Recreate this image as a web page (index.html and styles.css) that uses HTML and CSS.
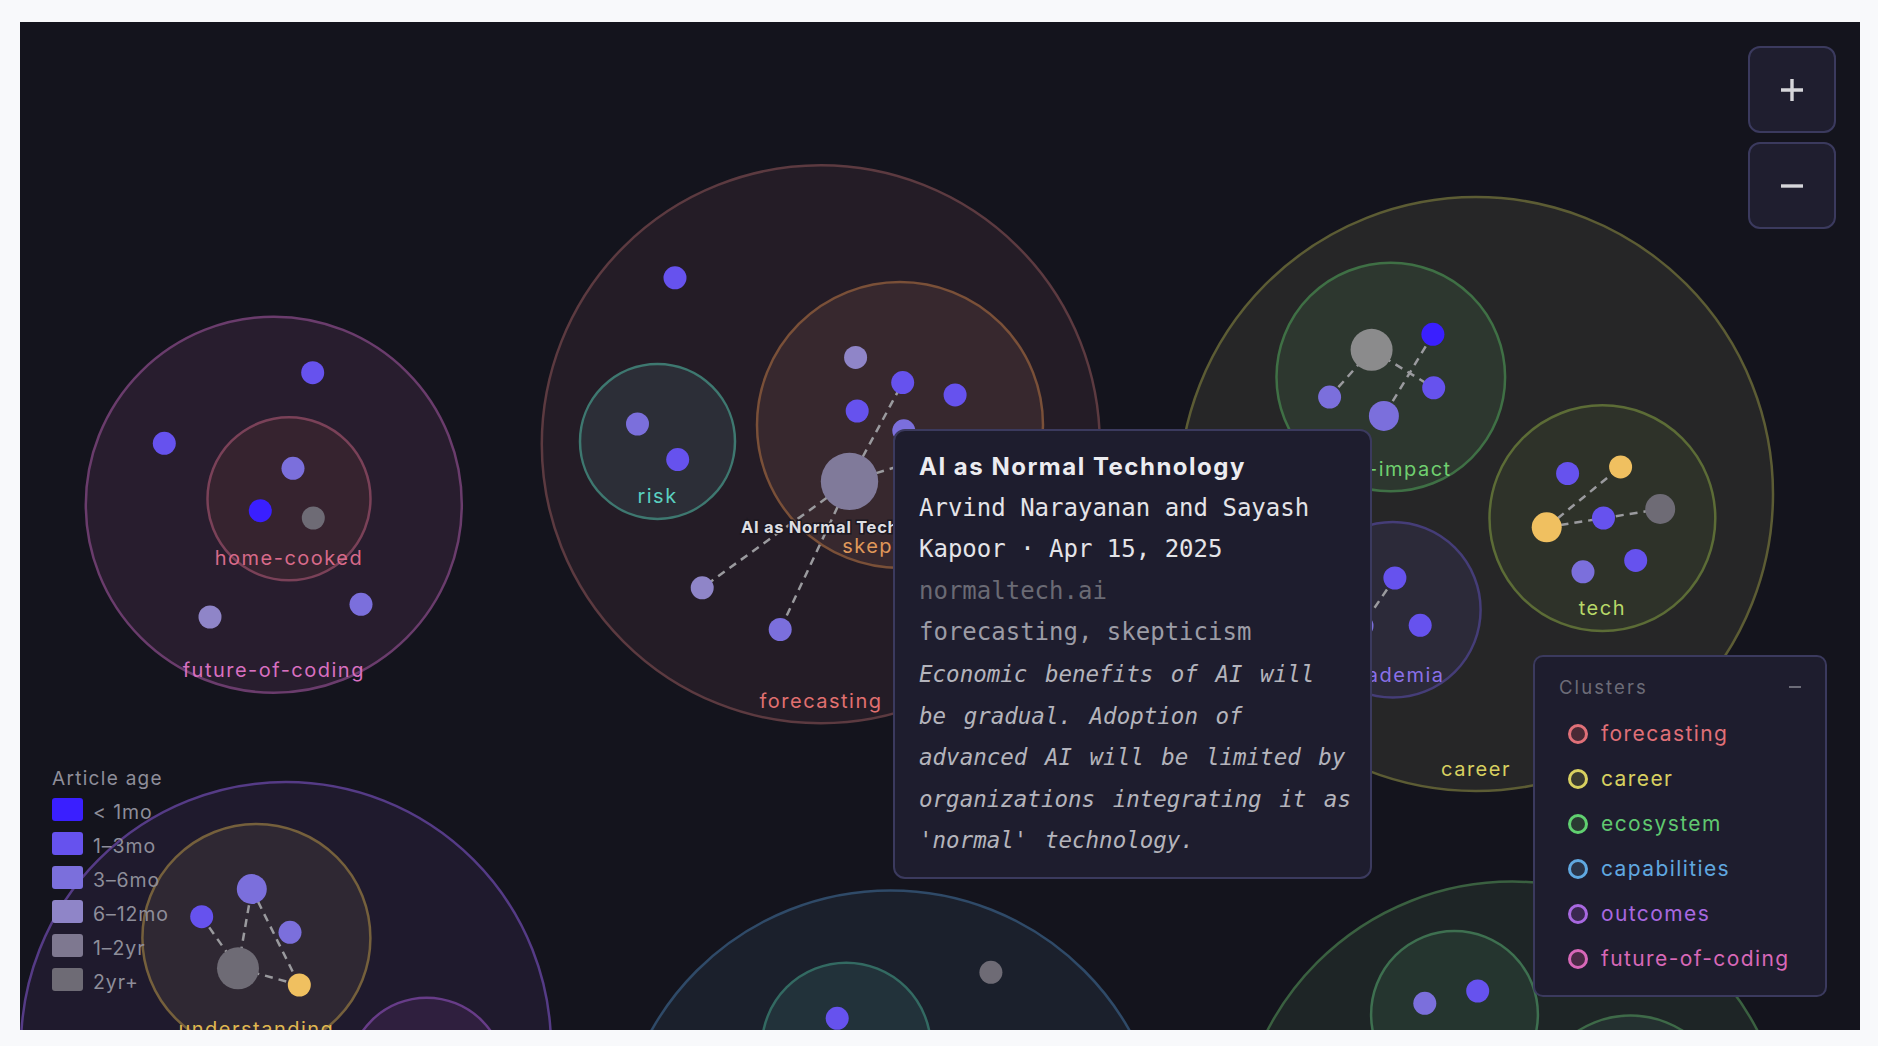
FILE: index.html
```html
<!DOCTYPE html>
<html>

<head>
    <title>Reading map</title>
    <link rel="stylesheet" href="styles.css">
</head>

<body>
<div class="stage">
    <svg class="graph" width="1840" height="1008" viewBox="20 22 1840 1008">
        <!-- cluster bubbles -->
        <circle class="ring fc-outer" cx="273.8" cy="504.7" r="188"/>
        <circle class="ring hc" cx="289" cy="498.8" r="81.5"/>
        <circle class="ring fore" cx="820.8" cy="444.3" r="279"/>
        <circle class="ring risk" cx="657.5" cy="441.4" r="77.5"/>
        <circle class="ring skep" cx="900" cy="425" r="143"/>
        <circle class="ring career" cx="1476" cy="494" r="297"/>
        <circle class="ring labor" cx="1390.8" cy="377" r="114.3"/>
        <circle class="ring acad" cx="1392.8" cy="609.8" r="87.8"/>
        <circle class="ring tech" cx="1602.4" cy="518.2" r="112.9"/>
        <circle class="ring outc" cx="286" cy="1047" r="265"/>
        <circle class="ring under" cx="256.4" cy="938" r="114"/>
        <circle class="ring outc-small" cx="426.7" cy="1075.7" r="78"/>
        <circle class="ring caps" cx="890.5" cy="1164.5" r="274"/>
        <circle class="ring caps-in" cx="846.3" cy="1047.2" r="84.5"/>
        <circle class="ring eco" cx="1512.4" cy="1157.6" r="276"/>
        <circle class="ring eco-in" cx="1454.5" cy="1014.4" r="83.4"/>
        <circle class="ring eco-small" cx="1630.5" cy="1112.5" r="97"/>

        <!-- links -->
        <line class="edge" x1="849.5" y1="481.4" x2="902.7" y2="382.6"/>
        <line class="edge" x1="849.5" y1="481.4" x2="702.2" y2="587.8"/>
        <line class="edge" x1="849.5" y1="481.4" x2="780.2" y2="629.5"/>
        <line class="edge" x1="849.5" y1="481.4" x2="980" y2="441"/>
        <line class="edge" x1="1371.6" y1="349.8" x2="1329.6" y2="397.1"/>
        <line class="edge" x1="1371.6" y1="349.8" x2="1433.7" y2="387.8"/>
        <line class="edge" x1="1432.9" y1="334.3" x2="1383.9" y2="415.9"/>
        <line class="edge" x1="1394.9" y1="578" x2="1362" y2="626"/>
        <line class="edge" x1="1546.7" y1="527.3" x2="1620.6" y2="466.9"/>
        <line class="edge" x1="1546.7" y1="527.3" x2="1660.2" y2="509"/>
        <line class="edge" x1="238" y1="968.3" x2="201.7" y2="916.7"/>
        <line class="edge" x1="238" y1="968.3" x2="251.8" y2="889"/>
        <line class="edge" x1="238" y1="968.3" x2="299.3" y2="985"/>
        <line class="edge" x1="251.8" y1="889" x2="299.3" y2="985"/>

        <!-- articles -->
        <circle class="age1" cx="312.7" cy="372.7" r="11.5"/>
        <circle class="age1" cx="164.3" cy="443.3" r="11.5"/>
        <circle class="age2" cx="293" cy="468.3" r="11.5"/>
        <circle class="age0" cx="260.3" cy="510.7" r="11.5"/>
        <circle class="age5" cx="313.3" cy="518" r="11.5"/>
        <circle class="age3" cx="210" cy="617" r="11.5"/>
        <circle class="age2" cx="361" cy="604.3" r="11.5"/>

        <circle class="age1" cx="675" cy="277.8" r="11.5"/>
        <circle class="age2" cx="637.5" cy="424" r="11.5"/>
        <circle class="age1" cx="677.7" cy="459.6" r="11.5"/>
        <circle class="age3" cx="855.6" cy="357.4" r="11.5"/>
        <circle class="age1" cx="902.7" cy="382.6" r="11.5"/>
        <circle class="age1" cx="955.1" cy="394.9" r="11.5"/>
        <circle class="age1" cx="857.2" cy="411" r="11.5"/>
        <circle class="age2" cx="903.8" cy="430.8" r="11.5"/>
        <circle class="age4" cx="849.5" cy="481.4" r="28.7"/>
        <circle class="age3" cx="702.2" cy="587.8" r="11.5"/>
        <circle class="age2" cx="780.2" cy="629.5" r="11.5"/>

        <circle class="grey" cx="1371.6" cy="349.8" r="21"/>
        <circle class="age0" cx="1432.9" cy="334.3" r="11.5"/>
        <circle class="age2" cx="1329.6" cy="397.1" r="11.5"/>
        <circle class="age1" cx="1433.7" cy="387.8" r="11.5"/>
        <circle class="age2" cx="1383.9" cy="415.9" r="15"/>

        <circle class="age1" cx="1394.9" cy="578" r="11.5"/>
        <circle class="age1" cx="1420.2" cy="625.3" r="11.5"/>
        <circle class="age2" cx="1362" cy="626" r="11.5"/>

        <circle class="age1" cx="1567.6" cy="473.5" r="11.5"/>
        <circle class="gold" cx="1620.6" cy="466.9" r="11.5"/>
        <circle class="gold" cx="1546.7" cy="527.3" r="15"/>
        <circle class="age1" cx="1603.5" cy="518" r="11.5"/>
        <circle class="age5" cx="1660.2" cy="509" r="15"/>
        <circle class="age2" cx="1583" cy="571.8" r="11.5"/>
        <circle class="age1" cx="1635.7" cy="560.4" r="11.5"/>

        <circle class="age2" cx="251.8" cy="889" r="15"/>
        <circle class="age1" cx="201.7" cy="916.7" r="11.5"/>
        <circle class="age2" cx="290" cy="932.3" r="11.5"/>
        <circle class="age5" cx="238" cy="968.3" r="21"/>
        <circle class="gold" cx="299.3" cy="985" r="11.5"/>

        <circle class="age1" cx="837.2" cy="1018.3" r="11.5"/>
        <circle class="age5" cx="990.9" cy="972.3" r="11.5"/>
        <circle class="age2" cx="1424.8" cy="1003.3" r="11.5"/>
        <circle class="age1" cx="1477.7" cy="991" r="11.5"/>

        <!-- labels -->
        <text class="label t-fc" x="273.8" y="677">future-of-coding</text>
        <text class="label t-hc" x="289" y="564.7">home-cooked</text>
        <text class="label t-fore" x="821" y="707.7">forecasting</text>
        <text class="label t-risk" x="657.5" y="503">risk</text>
        <text class="label t-skep" x="900" y="552.7">skepticism</text>
        <text class="label t-career" x="1476" y="776">career</text>
        <text class="label t-labor" x="1393" y="476">job-impact</text>
        <text class="label t-acad" x="1392.8" y="682">academia</text>
        <text class="label t-tech" x="1602.4" y="614.8">tech</text>
        <text class="label t-under" x="256.4" y="1036">understanding</text>
        <text class="node-title" x="849.5" y="533">AI as Normal Technology</text>
    </svg>

    <div class="zoom">
        <button class="zoom-btn">
            <svg width="24" height="24" viewBox="0 0 24 24"><path d="M12 1v22M1 12h22"/></svg>
        </button>
        <button class="zoom-btn">
            <svg width="24" height="24" viewBox="0 0 24 24"><path d="M1 12h22"/></svg>
        </button>
    </div>

    <div class="age">
        <div class="age-title">Article age</div>
        <div class="age-row"><span class="swatch sw0"></span><span class="age-label">&lt; 1mo</span></div>
        <div class="age-row"><span class="swatch sw1"></span><span class="age-label">1–3mo</span></div>
        <div class="age-row"><span class="swatch sw2"></span><span class="age-label">3–6mo</span></div>
        <div class="age-row"><span class="swatch sw3"></span><span class="age-label">6–12mo</span></div>
        <div class="age-row"><span class="swatch sw4"></span><span class="age-label">1–2yr</span></div>
        <div class="age-row"><span class="swatch sw5"></span><span class="age-label">2yr+</span></div>
    </div>

    <div class="tooltip">
        <div class="tip-title">AI as Normal Technology</div>
        <div class="tip-meta">Arvind Narayanan and Sayash Kapoor · Apr 15, 2025</div>
        <div class="tip-source">normaltech.ai</div>
        <div class="tip-tags">forecasting, skepticism</div>
        <div class="tip-summary">
            <span>Economic benefits of AI will</span>
            <span>be gradual. Adoption of</span>
            <span>advanced AI will be limited by</span>
            <span>organizations integrating it as</span>
            <span>'normal' technology.</span>
        </div>
    </div>

    <div class="clusters">
        <div class="clusters-head">
            <span>Clusters</span>
            <span class="collapse"></span>
        </div>
        <ul class="cluster-list">
            <li class="k-fore"><span class="dot"></span>forecasting</li>
            <li class="k-career"><span class="dot"></span>career</li>
            <li class="k-eco"><span class="dot"></span>ecosystem</li>
            <li class="k-caps"><span class="dot"></span>capabilities</li>
            <li class="k-outc"><span class="dot"></span>outcomes</li>
            <li class="k-fc"><span class="dot"></span>future-of-coding</li>
        </ul>
    </div>
</div>
</body>

</html>
```

FILE: styles.css
```css
body {
    margin: 0;
    background-color: #f8f9fb;
    font-family: Inter, "Noto Sans", sans-serif;
}

.stage {
    position: relative;
    width: 1840px;
    height: 1008px;
    margin: 22px 0 0 20px;
    background-color: #14141d;
    overflow: hidden;
}

.graph {
    display: block;
}

/* bubbles */
.ring {
    stroke-width: 2.5;
}

.fc-outer { fill: #281d2e; stroke: #6a3c6c; }
.hc { fill: #36232f; stroke: #7a4158; }
.fore { fill: #241c26; stroke: #5c3a40; }
.risk { fill: #2c2e37; stroke: #3e7870; }
.skep { fill: #37282e; stroke: #7a5038; }
.career { fill: #262627; stroke: #5c5c34; }
.labor { fill: #2d372f; stroke: #3f7045; }
.acad { fill: #2c2a39; stroke: #453d78; }
.tech { fill: #2e3229; stroke: #5c6c36; }
.outc { fill: #1f1a2d; stroke: #553b86; }
.under { fill: #2f2833; stroke: #75603c; }
.outc-small { fill: #2f1f3e; stroke: #673c88; }
.caps { fill: #1b202c; stroke: #2f4a68; }
.caps-in { fill: #22323a; stroke: #336a62; }
.eco { fill: #1e2526; stroke: #3a6040; }
.eco-in { fill: #25352f; stroke: #3e7050; }
.eco-small { fill: #243030; stroke: #3e6a48; }

.edge {
    stroke: #9a9a9e;
    stroke-width: 2.5;
    stroke-dasharray: 8 6;
    fill: none;
}

/* article ages */
.age0 { fill: #3a1fff; }
.age1 { fill: #6652ee; }
.age2 { fill: #7b6fdc; }
.age3 { fill: #8f85c8; }
.age4 { fill: #807a9a; }
.age5 { fill: #6e6b75; }
.grey { fill: #8b8b8c; }
.gold { fill: #f0c060; }

.label {
    font-family: Inter, "Noto Sans", sans-serif;
    font-size: 20px;
    letter-spacing: 1.5px;
    text-anchor: middle;
}

.t-fc { fill: #d870c0; }
.t-hc { fill: #d86a8a; }
.t-fore { fill: #e07070; }
.t-risk { fill: #5ad0c0; }
.t-skep { fill: #e0985a; }
.t-career { fill: #d8d060; }
.t-labor { fill: #70d070; }
.t-acad { fill: #8a70e8; }
.t-tech { fill: #b8d868; }
.t-under { fill: #e0b850; }

.node-title {
    font-family: Inter, sans-serif;
    font-size: 16.5px;
    font-weight: 700;
    letter-spacing: 0.7px;
    text-anchor: middle;
    fill: #dedee2;
    stroke: #1c1820;
    stroke-width: 3px;
    paint-order: stroke;
}

/* zoom controls */
.zoom {
    position: absolute;
    top: 24px;
    right: 24px;
    display: flex;
    flex-direction: column;
    gap: 9px;
}

.zoom-btn {
    width: 88px;
    height: 87px;
    padding: 0;
    border: 2px solid #3b3a5e;
    border-radius: 12px;
    background-color: #1f1e2f;
    display: flex;
    align-items: center;
    justify-content: center;
    cursor: pointer;
}

.zoom-btn svg {
    stroke: #d6d6da;
    stroke-width: 3.4;
    fill: none;
}

/* age legend */
.age {
    position: absolute;
    left: 32px;
    top: 747px;
    display: flex;
    flex-direction: column;
    gap: 11px;
    color: #8e8e9a;
    font-size: 19.5px;
    letter-spacing: 0.9px;
}

.age-title {
    line-height: 20px;
    margin-bottom: -2px;
    font-size: 19px;
    letter-spacing: 1.3px;
}

.age-row {
    display: flex;
    align-items: center;
    gap: 10px;
    height: 23px;
}

.age-label {
    line-height: 23px;
    padding-top: 6px;
}

.swatch {
    width: 31px;
    height: 23px;
    border-radius: 3px;
}

.sw0 { background-color: #3a1fff; }
.sw1 { background-color: #6652ee; }
.sw2 { background-color: #7b6fdc; }
.sw3 { background-color: #8f85c8; }
.sw4 { background-color: #7e7890; }
.sw5 { background-color: #6e6b75; }

/* tooltip */
.tooltip {
    position: absolute;
    left: 873px;
    top: 407px;
    width: 479px;
    height: 450px;
    box-sizing: border-box;
    padding: 15px 24px 0 24px;
    border: 2px solid #3b3a5e;
    border-radius: 12px;
    background-color: #1e1d2e;
    font-family: "DejaVu Sans Mono", monospace;
    font-size: 24px;
    line-height: 41.6px;
}

.tip-title {
    font-family: Inter, sans-serif;
    font-weight: 700;
    font-size: 24px;
    letter-spacing: 1.5px;
    color: #ececf0;
}

.tip-meta {
    color: #e4e4e8;
}

.tip-source {
    color: #6a6a74;
}

.tip-tags {
    color: #9c9ca6;
}

.tip-summary {
    font-style: italic;
    font-size: 22.5px;
    word-spacing: 4px;
    color: #b4b4bc;
}

.tip-summary span {
    display: block;
    white-space: nowrap;
}

/* cluster legend */
.clusters {
    position: absolute;
    right: 33px;
    bottom: 33px;
    width: 294px;
    height: 342px;
    box-sizing: border-box;
    padding: 18px 24px 0 24px;
    border: 2px solid #3b3a5e;
    border-radius: 10px;
    background-color: #1e1d2e;
}

.clusters-head {
    display: flex;
    justify-content: space-between;
    align-items: center;
    height: 24px;
    font-size: 18.5px;
    letter-spacing: 2.1px;
    color: #6c6c78;
}

.collapse {
    width: 12px;
    height: 2px;
    background-color: #6c6c78;
}

.cluster-list {
    list-style: none;
    margin: 12px 0 0 0;
    padding: 0 0 0 9px;
}

.cluster-list li {
    display: flex;
    align-items: center;
    gap: 13px;
    height: 45px;
    font-size: 21px;
    letter-spacing: 1.4px;
}

.dot {
    width: 20px;
    height: 20px;
    box-sizing: border-box;
    border-radius: 50%;
    border: 3.5px solid;
}

.k-fore { color: #e07078; }
.k-fore .dot { border-color: #e07078; background-color: #4a2a35; }
.k-career { color: #d8d060; }
.k-career .dot { border-color: #d8d060; background-color: #3a3a30; }
.k-eco { color: #60c870; }
.k-eco .dot { border-color: #60d070; background-color: #2a3a32; }
.k-caps { color: #60a8e0; }
.k-caps .dot { border-color: #60a8e0; background-color: #2a3448; }
.k-outc { color: #a868e0; }
.k-outc .dot { border-color: #a868e0; background-color: #3a2850; }
.k-fc { color: #d868b8; }
.k-fc .dot { border-color: #d868b8; background-color: #4a2a45; }
```
